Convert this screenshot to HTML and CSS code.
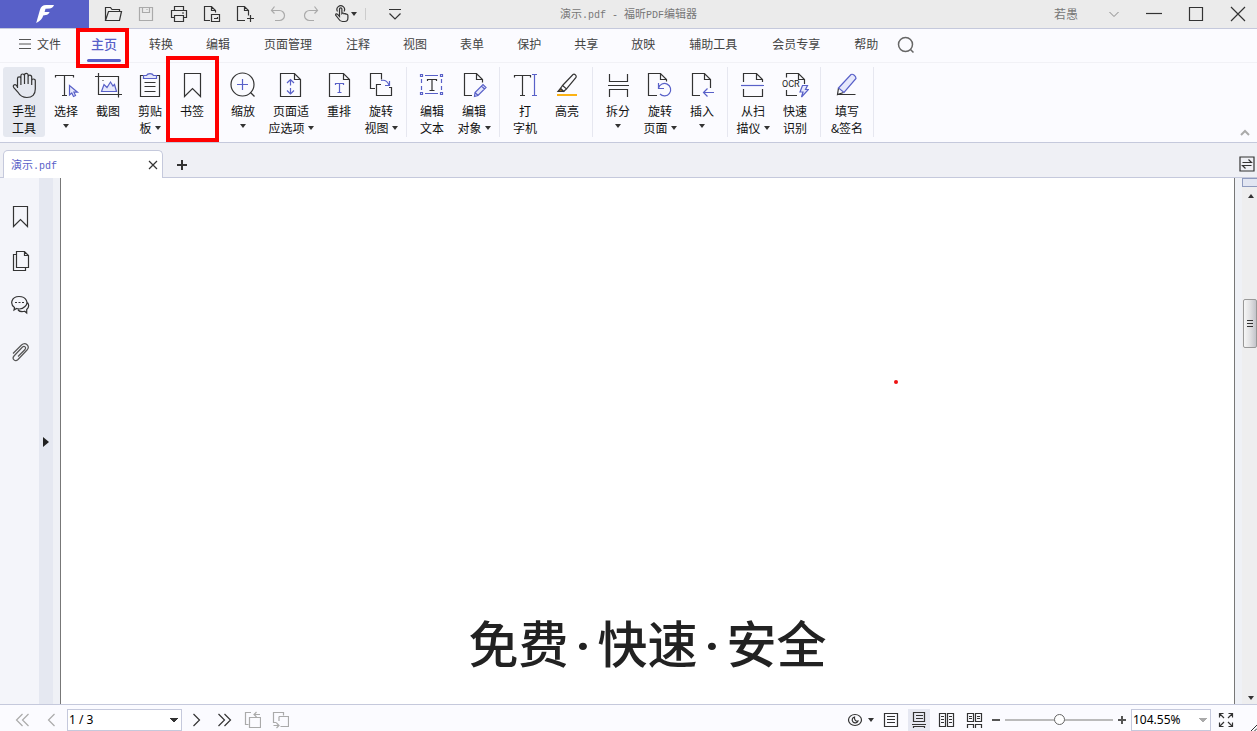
FILE: index.html
```html
<!DOCTYPE html>
<html lang="zh-CN">
<head>
<meta charset="utf-8">
<meta name="viewport" content="width=device-width, initial-scale=1">
<title>演示.pdf - 福昕PDF编辑器</title>
<link rel="stylesheet" href="styles.css">
</head>
<body>
<header class="titlebar">
  <div class="brand">
    <svg width="20" height="20" viewBox="0 0 20 20"><path d="M19 1c-.6 2-1.800 3.200-4 3.400l-4.500.4-.9 3.200h5c-.8 1.900-1.800 2.700-3.700 3l-2.700.4C7.500 14.500 5 17 1.200 19L4.900 6C5.900 2.600 7.700 1 11.200 1z"/></svg>
  </div>
  <div class="quick">
    <button class="qbtn" aria-label="打开"><svg viewBox="0 0 20 20"><path d="M2.500 16.500v-13h5l1.500 2h7.500v2M2.500 16.500l3-9h13l-2 9z"/></svg></button>
    <button class="qbtn dim" aria-label="保存"><svg viewBox="0 0 20 20"><path d="M3.500 3.500h13v13h-13zM6.500 3.500v5h7v-5M10.500 5.500h1"/></svg></button>
    <button class="qbtn" aria-label="打印"><svg viewBox="0 0 20 20"><path d="M5.500 6.500v-4h9v4M5.500 13.500h-3v-7h15v7h-3M5.500 11.500h9v6h-9zM13 9h2"/></svg></button>
    <button class="qbtn" aria-label="转换"><svg viewBox="0 0 20 20"><path d="M8 16.500H2.500v-14h7l4 4v2M9.500 2.500v4h4M9.500 10.500h8v7h-8zM12 14.500h3.500v-1.500"/></svg></button>
    <button class="qbtn" aria-label="新建"><svg viewBox="0 0 20 20"><path d="M10 16.500H2.500v-14h7l4 4v5M9.500 2.500v4h4M15.500 11v7M12 14.500h7"/></svg></button>
    <button class="qbtn dim" aria-label="撤销"><svg viewBox="0 0 20 20"><path d="M6.500 2.500l-3 4 3 3M3.500 6.500h8a5 5 0 0 1 0 10H7"/></svg></button>
    <button class="qbtn dim" aria-label="重做"><svg viewBox="0 0 20 20"><path d="M13.500 2.500l3 4-3 3M16.500 6.500h-8a5 5 0 0 0 0 10H13"/></svg></button>
    <button class="qbtn touch" aria-label="触摸模式"><svg viewBox="0 0 20 20"><path d="M5.500 12.500V5a1.200 1.200 0 0 1 2.400 0v4.500c.8-.8 1.900-.6 2.200.3.800-.5 1.700-.2 2 .5 1-.3 1.800.2 1.800 1.200v2.500c0 2-1.200 3.500-3.200 3.500H8.500c-2 0-2.800-.8-3.800-2.500L1.600 11c0-1.200 1-1.400 1.800-.8zM3.500 7.500a3.800 3.800 0 1 1 6.500 0"/></svg><i class="caret"></i></button>
    <span class="qsep"></span>
    <button class="qbtn" aria-label="自定义快速访问"><svg viewBox="0 0 20 20"><path d="M4 5.500h12M4.500 9.500l5.500 5.500 5.500-5.500"/></svg></button>
  </div>
  <h1 class="doc-title">演示<span class="mono">.pdf - </span>福昕<span class="mono">PDF</span>编辑器</h1>
  <div class="window-tools">
    <button class="user">若愚<svg width="12" height="12" viewBox="0 0 12 12"><path d="M1.500 4L6 8.500 10.500 4"/></svg></button>
    <button class="win" aria-label="最小化"><svg viewBox="0 0 18 18"><path d="M1 8.500h16"/></svg></button>
    <button class="win" aria-label="最大化"><svg viewBox="0 0 18 18"><path d="M2.500 2.500h13v13h-13z"/></svg></button>
    <button class="win" aria-label="关闭"><svg viewBox="0 0 18 18"><path d="M2 2l14 14M16 2L2 16"/></svg></button>
  </div>
</header>

<nav class="menu">
  <button class="file"><svg width="12" height="10" viewBox="0 0 12 10"><path d="M0 .5h12M0 5h12M0 9.500h12"/></svg>文件</button>
  <button class="current">主页<span class="mark mark-tab"></span></button>
  <button>转换</button>
  <button>编辑</button>
  <button class="wide">页面管理</button>
  <button>注释</button>
  <button>视图</button>
  <button>表单</button>
  <button>保护</button>
  <button>共享</button>
  <button>放映</button>
  <button class="wide">辅助工具</button>
  <button class="wide">会员专享</button>
  <button>帮助</button>
  <button class="search" aria-label="搜索"><svg width="18" height="18" viewBox="0 0 18 18"><circle cx="8.500" cy="8.500" r="7"/><path d="M13.500 13.500l3 3"/></svg></button>
</nav>

<section class="ribbon">
  <button class="tool on"><svg viewBox="0 0 28 28"><path d="M7.500 17V7.500a1.700 1.700 0 0 1 3.400 0V14M10.900 13V4.800a1.800 1.800 0 0 1 3.600 0V13M14.500 13V4.200a1.800 1.800 0 0 1 3.600 0V13M18.100 13V6a1.800 1.800 0 0 1 3.600 0v8M21.700 13V9.800a1.800 1.800 0 0 1 3.600 0V18c0 5.500-3 8.500-8.500 8.500-5 0-7-2-9-5.500l-4.200-4.700c-1.200-1.900 1.200-3.500 2.600-2.100L7.500 16"/></svg><span>手型<br>工具</span></button>
  <button class="tool"><svg viewBox="0 0 28 28"><path d="M3.500 6.500v-2h18v2M12.500 4.500v20M10 24.500h5"/><path class="vf" d="M17.500 14.500v9.500l2.300-2 1.700 3.500 2-1-1.600-3.300h3.600z"/></svg><span>选择</span><i class="caret"></i></button>
  <button class="tool"><svg viewBox="0 0 28 28"><path d="M1 5.500h23.500v21M4.500 2v21.500H28M8.500 9.500h1"/><path class="vf" d="M7.500 20.500l2.500-7 3 3 3.500-5.500 2.500 4 1.500-1.500 2 7z"/></svg><span>截图</span></button>
  <button class="tool"><svg viewBox="0 0 28 28"><path d="M4.500 4.500h19v21h-19zM8.500 11.500h11M8.500 15.500h11M8.500 20.500h11"/><path class="vf" d="M7.500 7.500v-3h3c1-2.500 6-2.500 7 0h3v3z"/></svg><span>剪贴<br>板<i class="caret"></i></span></button>
  <button class="tool"><svg viewBox="0 0 28 28"><path d="M6.500 2.500h16v23l-8-8-8 8z"/></svg><span>书签</span><span class="mark mark-tool"></span></button>
  <hr>
  <button class="tool"><svg viewBox="0 0 28 28"><circle cx="13.500" cy="13.500" r="11.500"/><path d="M21.500 21.500l4 4"/><path class="v" d="M13.500 8v11M8 13.500h11"/></svg><span>缩放</span><i class="caret"></i></button>
  <button class="tool broad"><svg viewBox="0 0 28 28"><path d="M17.500 2.500h-14v23h20v-17zM17.500 2.500v6h6"/><path class="v" d="M13.500 8.500v6M13.500 17v6M10 12l3.500-3.500L17 12M10 19.500l3.500 3.500 3.500-3.500"/></svg><span>页面适<br>应选项<i class="caret"></i></span></button>
  <button class="tool"><svg viewBox="0 0 28 28"><path d="M18.500 2.500h-14v23h20v-17zM18.500 2.500v6h6"/><path class="v" d="M10.500 14v-1.500h8V14M14.500 12.500v9M12.500 21.500h4"/></svg><span>重排</span></button>
  <button class="tool"><svg viewBox="0 0 28 28"><path d="M8 17.500H3.500v-15h11v6M14 13.500H9.500v11h15v-8H22"/><path class="v" d="M14 9.500c4-1 6.500 1 8 4.500M18 14.500h4.500V10"/></svg><span>旋转<br>视图<i class="caret"></i></span></button>
  <hr>
  <button class="tool"><svg viewBox="0 0 28 28"><path d="M9.500 10V8.500h9V10M14 8.500v11M11.500 19.500h5"/><path class="v" d="M2.500 3.500h2v2h-2zM22.500 3.500h2v2h-2zM2.500 21.500h2v2h-2zM22.500 21.500h2v2h-2zM7 4.500h13M7 22.500h13M3.500 8v4M3.500 15v4M23.500 8v4M23.500 15v4"/></svg><span>编辑<br>文本</span></button>
  <button class="tool"><svg viewBox="0 0 28 28"><path d="M12 24.500H4.500v-22h12l6 6v3M16.500 2.500v6h6"/><path class="vf" d="M14.500 25.500l.5-4 8-8 3 3-8 8zM21.500 15l3 3M15 21.500l3 3"/></svg><span>编辑<br>对象<i class="caret"></i></span></button>
  <hr>
  <button class="tool"><svg viewBox="0 0 28 28"><path d="M3.500 6.500v-2h16v2M11.500 4.500v20M9 24.500h5"/><path class="v" d="M21 3.500h5M23.500 3.500v21M21 24.500h5"/></svg><span>打<br>字机</span></button>
  <button class="tool"><svg viewBox="0 0 28 28"><path class="ink" d="M4 23h20v2H4z"/><path d="M9.500 14.500L20 3.500c1.500-1 4 1 3 3L13.500 18zM9.500 14.500l-2 3 3 3 3-2.500"/><path fill="#a96f19" d="M7.500 17.500L5 20.500h5.500z"/></svg><span>高亮</span></button>
  <hr>
  <button class="tool"><svg viewBox="0 0 28 28"><path d="M5.500 3v7.500h18V3M4 14.500h21M5.500 26v-7.500h18V26"/></svg><span>拆分</span><i class="caret"></i></button>
  <button class="tool"><svg viewBox="0 0 28 28"><path d="M11 24.500H2.500v-22h12l6 6v2M14.500 2.500v6h6"/><path class="v" d="M12.500 12v5.500H18M12.500 17a6.200 6.200 0 1 1 1.500 6"/></svg><span>旋转<br>页面<i class="caret"></i></span></button>
  <button class="tool"><svg viewBox="0 0 28 28"><path d="M12 24.500H4.500v-22h12l6 6V17M16.500 2.500v6h6"/><path class="v" d="M26 21.500H15.500M19.500 17.500l-4 4 4 4"/></svg><span>插入</span><i class="caret"></i></button>
  <hr>
  <button class="tool"><svg viewBox="0 0 28 28"><path d="M4.500 11V2.500h13l6 6V11M17.500 2.500v6h6M4.500 18v7.500h19V18"/><path class="v" d="M2 14.500h23"/></svg><span>从扫<br>描仪<i class="caret"></i></span></button>
  <button class="tool"><svg viewBox="0 0 28 28"><path d="M5.500 6.500v-4h12l6 6V13M17.500 2.500v6h6M5.500 19v5.500H16"/><text x="1" y="16">OCR</text><path class="vf" d="M21.500 14.500h5l-2 4h3l-7 7.500 1.500-5h-3z"/></svg><span>快速<br>识别</span></button>
  <hr>
  <button class="tool sign"><svg viewBox="0 0 28 28"><path d="M4.500 23.500h18M5.500 17l-1 6.500 6-2"/><path class="vf" d="M5.500 17L18 3.500c2-1 5 1.500 5 4l-12 14z"/></svg><span>填写<br>&amp;签名</span></button>
  <hr>
  <button class="collapse" aria-label="收起功能区"><svg width="10" height="8" viewBox="0 0 10 8"><path d="M1 6l4-4 4 4"/></svg></button>
</section>

<div class="tabs">
  <div class="doc-tab"><span>演示<span class="mono">.pdf</span></span><button aria-label="关闭标签"><svg width="10" height="10" viewBox="0 0 10 10"><path d="M1 1l8 8M9 1L1 9"/></svg></button></div>
  <button class="add" aria-label="新建标签"><svg width="10" height="10" viewBox="0 0 10 10"><path d="M5 0v10M0 5h10"/></svg></button>
  <button class="swap" aria-label="切换"><svg width="16" height="16" viewBox="0 0 16 16"><path d="M1 1h14v14H1zM3.500 6.500h9l-3-3M12.500 9.500h-9l3 3"/></svg></button>
</div>

<main class="work">
  <aside class="side">
    <button aria-label="书签"><svg viewBox="0 0 20 24"><path d="M3.500 1.500h14v20l-7-7-7 7z"/></svg></button>
    <button aria-label="页面"><svg viewBox="0 0 20 24"><path d="M14.500 2.500h-8v16h12v-12zM14.500 2.500v4h4M6.500 5.500h-3v16h12v-3"/></svg></button>
    <button aria-label="注释"><svg viewBox="0 0 20 24"><path d="M4.500 14.500c-5-3.500-3-11 4.500-11s10 6.500 6 10c-2 2-5.500 3-8.500 2l-2.500 1.500zM17.500 9.500c2 3 1.500 5-.8 7v3.500l-2-1.800c-2.500.8-5.200.3-6.700-1.200M5 9.500h2M8.500 9.500h2M12 9.500h2"/></svg></button>
    <button class="clip" aria-label="附件"><svg viewBox="0 0 20 24"><path d="M3 12.500l8.500-8.500c4-3.500 9 1 5.500 5l-9 9.500c-2.800 2.800-6.500-.5-4-3.500l8.500-9c2-1.500 4 .5 2.500 2.500L8 15.500"/></svg></button>
  </aside>
  <button class="handle" aria-label="展开导航面板"></button>
  <div class="canvas">
    <article class="page">
      <span class="dot"></span>
      <p class="slogan">免费<b>·</b>快速<b>·</b>安全</p>
    </article>
  </div>
  <div class="scroll">
    <span class="split"></span>
    <button class="up" aria-label="向上滚动"></button>
    <span class="thumb"></span>
    <button class="down" aria-label="向下滚动"></button>
  </div>
</main>

<footer class="status">
  <div class="pager">
    <button class="faint" aria-label="第一页"><svg viewBox="0 0 18 18"><path d="M8.500 3l-6 6 6 6M14.500 3l-6 6 6 6"/></svg></button>
    <button class="faint" aria-label="上一页"><svg viewBox="0 0 18 18"><path d="M12.500 3l-6 6 6 6"/></svg></button>
    <select class="page-no" aria-label="页码"><option>1 / 3</option></select>
    <button aria-label="下一页"><svg viewBox="0 0 18 18"><path d="M6.500 3l6 6-6 6"/></svg></button>
    <button aria-label="最后一页"><svg viewBox="0 0 18 18"><path d="M3.500 3l6 6-6 6M9.500 3l6 6-6 6"/></svg></button>
    <button class="faint" aria-label="上一视图"><svg viewBox="0 0 18 18"><path d="M8 1.500H2.500v12h3M6.500 6.500h11v10h-11zM11.500 3.500H17M13.500 1l-2.500 2.500L13.500 6"/></svg></button>
    <button class="faint" aria-label="下一视图"><svg viewBox="0 0 18 18"><path d="M5.500 11.500h-3v-10h10v3M8 5.500h9.500v10H9.500M8 5.500v4.500M2.500 14.500H8M5.500 12L8 14.500 5.500 17"/></svg></button>
  </div>
  <div class="viewer">
    <button class="eye" aria-label="阅读模式"><svg viewBox="0 0 18 18"><ellipse cx="9" cy="9" rx="6.500" ry="5.500"/><path d="M8.500 6a3 3 0 1 0 3.500 4c-2 .5-4-1-3.500-4z"/></svg><i class="caret"></i></button>
    <button aria-label="单页"><svg viewBox="0 0 18 18"><path d="M2.500 2.500h13v13h-13zM5 5.500h8M5 8.500h8M5 11.500h8"/></svg></button>
    <button class="active" aria-label="连续"><svg viewBox="0 0 18 18"><path d="M3.500 1.500h11v9h-11zM6 4.500h7M6 7.500h7M2 13.500h14M3.500 17v-1.500h11V17"/></svg></button>
    <button aria-label="双页"><svg viewBox="0 0 18 18"><path d="M1.500 2.500h6v13h-6zM9.500 2.500h6v13h-6zM3 5.500h3M3 8.500h3M3 11.500h3M11 5.500h3M11 8.500h3M11 11.500h3"/></svg></button>
    <button aria-label="双页连续"><svg viewBox="0 0 18 18"><path d="M1.500 2.500h6v8h-6zM9.500 2.500h6v8h-6zM3 5.500h3M3 7.500h3M11 5.500h3M11 7.500h3M1.500 17v-3.500h6V17M9.500 17v-3.500h6V17"/></svg></button>
    <div class="scale">
      <button class="step" aria-label="缩小"><svg viewBox="0 0 8 8"><path d="M0 4h8"/></svg></button>
      <input type="range" class="zoom" min="0" max="100" value="50" aria-label="缩放">
      <button class="step" aria-label="放大"><svg viewBox="0 0 8 8"><path d="M0 4h8M4 0v8"/></svg></button>
      <select class="zoom-no" aria-label="缩放比例"><option>104.55%</option></select>
      <button class="full" aria-label="全屏"><svg viewBox="0 0 18 18"><path d="M2.500 6.500v-4h4M2.500 2.500L7 7M11.500 2.500h4v4M15.500 2.500L11 7M2.500 11.500v4h4M2.500 15.500L7 11M15.500 11.500v4h-4M15.500 15.500L11 11"/></svg></button>
    </div>
  </div>
  <svg class="grip" width="6" height="6" viewBox="0 0 6 6"><path d="M0 6l6-6M3.500 6L6 3.500"/></svg>
</footer>
</body>
</html>
```

FILE: styles.css
```css
* { box-sizing: border-box; }

body {
  margin: 0;
  height: 100vh;
  display: flex;
  flex-direction: column;
  overflow: hidden;
  background: #fbfbff;
  color: #111;
  font: 12px/16px "Noto Sans CJK SC", sans-serif;
}

button {
  margin: 0;
  padding: 0;
  border: 0;
  background: none;
  color: inherit;
  font: inherit;
}

svg {
  display: block;
  flex: none;
  fill: none;
  stroke: #333;
  stroke-width: 1;
}

.mono { font: 10px/16px "Liberation Mono", monospace; white-space: pre; }

.caret {
  display: inline-block;
  border: 3px solid transparent;
  border-top: 4px solid #333;
  border-bottom: 0;
}

/* Title bar */
.titlebar {
  position: relative;
  flex: none;
  display: flex;
  height: 29px;
  background: #ebebeb;
  border-bottom: 1px solid #c5c9dc;
}
.brand {
  width: 89px;
  display: flex;
  align-items: center;
  justify-content: center;
  background: #5860c8;
}
.brand svg { fill: #fff; stroke: none; }
.quick { display: flex; align-items: center; gap: 13px; padding-left: 14px; }
.qbtn { display: flex; align-items: center; }
.qbtn svg { width: 20px; height: 20px; stroke-width: 1.2; }
.dim svg { stroke: #aaa; }
.touch { margin-right: -5px; }
.touch .caret { margin-left: -3px; }
.qsep { width: 1px; height: 12px; background: #ccc; margin-right: 6px; }
.doc-title {
  position: absolute;
  left: 0;
  right: 0;
  top: 5px;
  margin: 0;
  text-align: center;
  font-size: 11px;
  font-weight: 400;
  line-height: 16px;
  color: #777;
  pointer-events: none;
}
.window-tools { margin-left: auto; display: flex; align-items: center; gap: 24px; padding-right: 10px; }
.user { display: flex; align-items: center; gap: 30px; color: #777; margin-right: 1px; }
.user svg { stroke: #888; }
.win svg { width: 18px; height: 18px; stroke-width: 1.2; }

/* Menu row */
.menu {
  flex: none;
  display: flex;
  gap: 33px;
  height: 34px;
  padding-left: 19px;
  border-bottom: 1px solid #f1f1f6;
  color: #444;
}
.menu button { position: relative; display: flex; align-items: center; padding-bottom: 3px; }
.menu .file { gap: 6px; margin-right: -3px; }
.menu .file svg { stroke: #555; }
.menu .current { color: #5860c8; font-size: 13px; font-weight: 500; margin-right: -1px; }
.menu .current::after {
  content: "";
  position: absolute;
  left: -4px;
  right: -4px;
  bottom: 0;
  height: 3px;
  border-radius: 2px;
  background: #5860c8;
}
.menu .wide { padding: 0 1px 3px; }
.menu .search { margin-left: -14px; padding-bottom: 2px; }
.search svg { stroke: #666; stroke-width: 1.5; }

.mark { position: absolute; border: 4px solid #f00; z-index: 2; pointer-events: none; }
.mark-tab { left: -15px; right: -12px; top: -1px; bottom: -6px; }
.mark-tool { left: -5px; right: -6px; top: -11px; bottom: -5px; }

/* Ribbon */
.ribbon {
  flex: none;
  display: flex;
  padding: 4px 7px 5px 3px;
  border-bottom: 1px solid #c5c9dc;
}
.ribbon hr { width: 1px; margin: 0 4px; border: 0; background: #e6e7f0; }
.tool {
  position: relative;
  width: 42px;
  height: 70px;
  padding-top: 4px;
  display: flex;
  flex-direction: column;
  align-items: center;
  line-height: 17px;
  white-space: nowrap;
}
.tool svg { width: 28px; height: 28px; margin-bottom: 3px; stroke-width: 1.2; }
.tool > .caret { margin-top: 5px; }
.tool span .caret { margin-left: 3px; vertical-align: 3px; }
.tool .v { stroke: #5860c8; }
.tool .vf { stroke: #5860c8; fill: #e6e8fb; }
.tool .ink { fill: #fbb214; stroke: none; }
.tool text { font: 9px Roboto, sans-serif; fill: #222; stroke: none; }
.tool.broad { width: 54px; }
.tool.sign { width: 44px; }
.tool.on { background: #e5e8f0; border-radius: 3px; }
.collapse { margin-left: auto; align-self: flex-end; }
.collapse svg { stroke: #aaa; stroke-width: 2; }

/* Document tabs */
.tabs {
  flex: none;
  display: flex;
  height: 35px;
  padding: 7px 2px 0 3px;
  background: #eff0f5;
  border-bottom: 1px solid #c5c9dc;
}
.doc-tab {
  display: flex;
  align-items: center;
  justify-content: space-between;
  width: 160px;
  margin-bottom: -1px;
  padding: 1px 4px 0 7px;
  border: 1px solid #c5c9dc;
  border-bottom: 0;
  border-radius: 5px 5px 0 0;
  background: #fff;
  color: #5860c8;
  font-size: 11px;
}
.doc-tab svg { stroke-width: 1.2; }
.add { margin-left: 14px; padding-top: 2px; }
.add svg { stroke-width: 2; }
.swap { margin-left: auto; }
.swap svg { stroke-width: 1.2; }

/* Work area */
.work { flex: 1; min-height: 0; display: flex; background: #eff1f6; }
.side {
  flex: none;
  width: 39px;
  display: flex;
  flex-direction: column;
  align-items: center;
  gap: 20px;
  padding: 27px 0 0 1px;
  background: #f4f5fa;
}
.side svg { width: 20px; height: 24px; stroke-width: 1.2; }
.side .clip { padding-top: 4px; }
.side .clip svg { stroke: #555; }
.handle {
  flex: none;
  width: 14px;
  display: flex;
  align-items: center;
  justify-content: center;
  padding-top: 2px;
  background: #e5e8f1;
}
.handle::after { content: ""; border: 5px solid transparent; border-left: 6px solid #222; border-right: 0; }
.canvas { flex: 1; display: flex; padding: 0 7px; }
.page {
  position: relative;
  flex: 1;
  background: #fff;
  border: solid #777;
  border-width: 0 1px;
}
.dot {
  position: absolute;
  left: 71%;
  top: 202px;
  width: 4px;
  height: 4px;
  border-radius: 50%;
  background: #e11;
}
.slogan {
  margin: 0;
  padding-top: 427px;
  text-align: center;
  font-size: 50px;
  font-weight: 500;
  line-height: 72px;
  color: #222;
}
.slogan b { display: inline-block; width: 29px; font-family: Roboto, sans-serif; font-weight: 700; text-align: center; }
.scroll { flex: none; width: 15px; display: flex; flex-direction: column; align-items: center; background: #eeeeef; }
.split { align-self: stretch; height: 9px; border: 1px solid #8f9bbf; border-right: 0; background: #e2e6f2; }
.up, .down { width: 15px; height: 18px; display: flex; align-items: center; justify-content: center; padding-left: 2px; }
.up::after { content: ""; border: 3px solid transparent; border-top: 0; border-bottom: 4px solid #333; }
.down { margin-top: auto; height: 12px; }
.down::after { content: ""; border: 3px solid transparent; border-bottom: 0; border-top: 4px solid #333; }
.thumb {
  align-self: stretch;
  height: 49px;
  margin: 94px 0 0 1px;
  border: 1px solid #999;
  border-radius: 2px;
  background:
    repeating-linear-gradient(#333 0 1px, transparent 1px 3px) 3px center / 6px 8px no-repeat,
    linear-gradient(90deg, #f6f6f6, #e2e2e4 50%, #c4c4ca);
}

/* Status bar */
.status {
  position: relative;
  flex: none;
  display: flex;
  justify-content: space-between;
  height: 27px;
  border-top: 1px solid #c5c9dc;
}
.pager, .viewer, .scale { display: flex; align-items: center; }
.pager, .viewer { padding-top: 3px; gap: 10px; }
.pager { padding-left: 14px; }
.viewer { padding-right: 22px; }
.scale { gap: 5px; margin-left: -2px; }
.status button svg { width: 18px; height: 18px; stroke-width: 1.2; }
.status .faint svg { stroke: #aaa; }
.status select {
  appearance: none;
  height: 22px;
  padding: 0 1px;
  border: 1px solid #c5c9dc;
  border-radius: 0;
  background: conic-gradient(from -45deg at 50% 100%, #333 90deg, transparent 0) no-repeat right 3px center / 8px 4px #fff;
  color: #000;
  font: 12px/20px "Noto Sans", sans-serif;
}
.status .page-no { width: 115px; margin: 0 -5px 0 -3px; }
.status .zoom-no {
  width: 80px;
  margin-right: 1px;
  background-image: conic-gradient(from -45deg at 50% 100%, #aaa 90deg, transparent 0);
}
.eye { display: flex; align-items: center; gap: 4px; margin-right: -2px; }
.viewer .active { margin: 0 -2px; padding: 2px; background: #e6e8f2; }
.status .step svg { width: 8px; height: 8px; stroke-width: 2; stroke: #555; }
.zoom { appearance: none; width: 108px; height: 14px; margin: 0; background: linear-gradient(#bbb, #bbb) center / 100% 2px no-repeat; }
.zoom::-webkit-slider-thumb { appearance: none; width: 11px; height: 11px; border: 1px solid #666; border-radius: 50%; background: #fff; }
.grip { position: absolute; right: 0; bottom: 0; }
```
